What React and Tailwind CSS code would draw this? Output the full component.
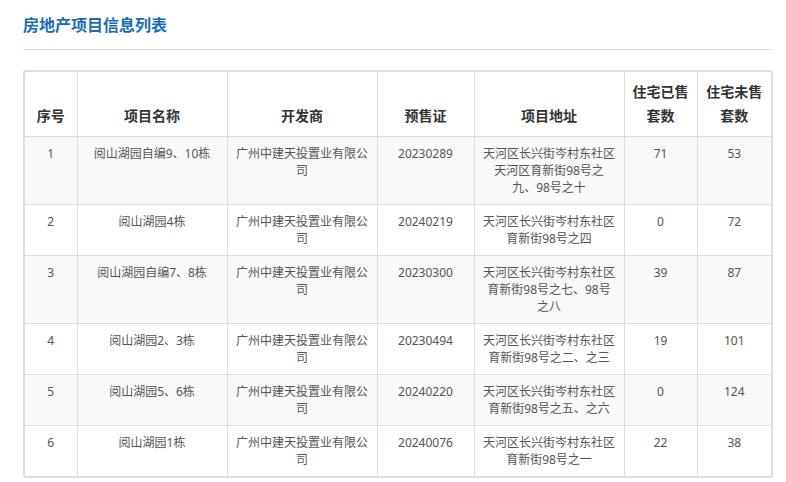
import React from 'react';

const projects = [
    { id: 1, name: '阅山湖园自编9、10栋', dev: '广州中建天投置业有限公司', permit: '20230289', addr: ['天河区长兴街岑村东社区', '天河区育新街98号之', '九、98号之十'], sold: 71, unsold: 53 },
    { id: 2, name: '阅山湖园4栋', dev: '广州中建天投置业有限公司', permit: '20240219', addr: ['天河区长兴街岑村东社区', '育新街98号之四'], sold: 0, unsold: 72 },
    { id: 3, name: '阅山湖园自编7、8栋', dev: '广州中建天投置业有限公司', permit: '20230300', addr: ['天河区长兴街岑村东社区', '育新街98号之七、98号', '之八'], sold: 39, unsold: 87 },
    { id: 4, name: '阅山湖园2、3栋', dev: '广州中建天投置业有限公司', permit: '20230494', addr: ['天河区长兴街岑村东社区', '育新街98号之二、之三'], sold: 19, unsold: 101 },
    { id: 5, name: '阅山湖园5、6栋', dev: '广州中建天投置业有限公司', permit: '20240220', addr: ['天河区长兴街岑村东社区', '育新街98号之五、之六'], sold: 0, unsold: 124 },
    { id: 6, name: '阅山湖园1栋', dev: '广州中建天投置业有限公司', permit: '20240076', addr: ['天河区长兴街岑村东社区', '育新街98号之一'], sold: 22, unsold: 38 },
];

const headers = ['序号', '项目名称', '开发商', '预售证', '项目地址', '住宅已售套数', '住宅未售套数'];

const App = () => {
    return (
        <div className="min-h-screen bg-white pl-[23px] pt-[13px] font-['Noto_Sans','Noto_Sans_CJK_SC',sans-serif]">
            {/* Title */}
            <h1 className="text-[16px] leading-[24px] font-bold text-[#1a6cb5]">房地产项目信息列表</h1>
            <div className="w-[750px] h-px bg-[#dddddd] mt-[12px]" />

            {/* Table */}
            <div className="w-[750px] mt-[20px] border-2 border-[#dedede] rounded-[3px]">
                <table className="w-full table-fixed border-collapse border-hidden">
                    <colgroup>
                        <col className="w-[52px]" />
                        <col className="w-[150px]" />
                        <col className="w-[150px]" />
                        <col className="w-[97px]" />
                        <col className="w-[150px]" />
                        <col className="w-[73px]" />
                        <col className="w-[74px]" />
                    </colgroup>
                    <thead>
                        <tr>
                            <th className="border border-[#dddddd] px-2 py-2 align-bottom text-[14px] leading-[24px] font-bold text-[#333333]">序号</th>
                            <th className="border border-[#dddddd] px-2 py-2 align-bottom text-[14px] leading-[24px] font-bold text-[#333333]">项目名称</th>
                            <th className="border border-[#dddddd] px-2 py-2 align-bottom text-[14px] leading-[24px] font-bold text-[#333333]">开发商</th>
                            <th className="border border-[#dddddd] px-2 py-2 align-bottom text-[14px] leading-[24px] font-bold text-[#333333]">预售证</th>
                            <th className="border border-[#dddddd] px-2 py-2 align-bottom text-[14px] leading-[24px] font-bold text-[#333333]">项目地址</th>
                            <th className="border border-[#dddddd] px-2 py-2 align-bottom text-[14px] leading-[24px] font-bold text-[#333333]">住宅已售<br />套数</th>
                            <th className="border border-[#dddddd] px-2 py-2 align-bottom text-[14px] leading-[24px] font-bold text-[#333333]">住宅未售<br />套数</th>
                        </tr>
                    </thead>
                    <tbody>
                        {projects.map((p, i) => (
                            <tr key={p.id} className={i % 2 === 0 ? 'bg-[#f9f9f9]' : 'bg-white'}>
                                <td className="border border-[#dddddd] px-2 py-2 align-top text-center text-[12px] leading-[17px] text-[#555555]">{p.id}</td>
                                <td className="border border-[#dddddd] px-2 py-2 align-top text-center text-[12px] leading-[17px] text-[#555555]">{p.name}</td>
                                <td className="border border-[#dddddd] px-2 py-2 align-top text-center text-[12px] leading-[17px] text-[#555555]">{p.dev}</td>
                                <td className="border border-[#dddddd] px-2 py-2 align-top text-center text-[12px] leading-[17px] text-[#555555]">{p.permit}</td>
                                <td className="border border-[#dddddd] px-2 py-2 align-top text-center text-[12px] leading-[17px] text-[#555555]">
                                    {p.addr.map((line, j) => (
                                        <div key={j} className="whitespace-nowrap">{line}</div>
                                    ))}
                                </td>
                                <td className="border border-[#dddddd] px-2 py-2 align-top text-center text-[12px] leading-[17px] text-[#555555]">{p.sold}</td>
                                <td className="border border-[#dddddd] px-2 py-2 align-top text-center text-[12px] leading-[17px] text-[#555555]">{p.unsold}</td>
                            </tr>
                        ))}
                    </tbody>
                </table>
            </div>
        </div>
    );
};

export default App;
